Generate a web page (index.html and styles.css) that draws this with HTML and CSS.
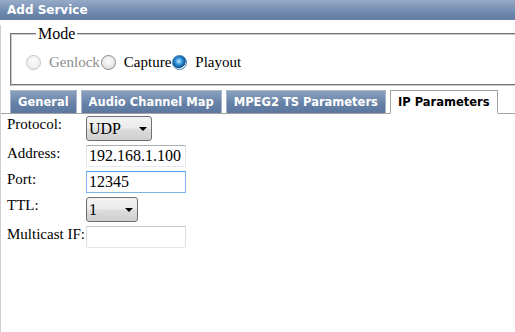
FILE: index.html
```html
<!DOCTYPE html>
<html lang="en">
<head>
    <meta charset="UTF-8">
    <title>Add Service</title>
    <link rel="stylesheet" href="styles.css">
</head>
<body>
    <div class="dialog">
        <div class="titlebar">Add Service</div>
        <div class="content">
            <fieldset class="mode">
                <legend>Mode</legend>
                <div class="radios">
                    <label class="disabled"><input type="radio" name="mode" disabled>Genlock</label>
                    <label><input type="radio" name="mode">Capture</label>
                    <label><input type="radio" name="mode" checked>Playout</label>
                </div>
            </fieldset>

            <ul class="tabs">
                <li>General</li>
                <li>Audio Channel Map</li>
                <li>MPEG2 TS Parameters</li>
                <li class="active">IP Parameters</li>
            </ul>

            <div class="form">
                <label>Protocol:</label>
                <span class="select" style="width: 66px">
                    <select><option>UDP</option><option>RTP</option></select>
                </span>

                <label>Address:</label>
                <input type="text" value="192.168.1.100">

                <label>Port:</label>
                <input type="text" class="focused" value="12345">

                <label>TTL:</label>
                <span class="select" style="width: 52px">
                    <select><option>1</option><option>2</option></select>
                </span>

                <label>Multicast IF:</label>
                <input type="text" class="soft" value="">
            </div>
        </div>
    </div>
</body>
</html>
```

FILE: styles.css
```css
html, body {
    margin: 0;
    padding: 0;
    background: #fff;
}

.dialog {
    font-family: "Liberation Serif", "Times New Roman", serif;
    color: #000;
}

.titlebar {
    height: 20px;
    line-height: 20px;
    padding-left: 7px;
    background: linear-gradient(#97abc8, #6a84aa 70%, #647fa5);
    color: #fff;
    font-family: "DejaVu Sans", Verdana, sans-serif;
    font-weight: bold;
    font-size: 12px;
}

.content {
    border-left: 1px solid #cfcfcf;
    height: 312px;
}

/* mode box */
.mode {
    margin: 5px 0 0 9px;
    padding: 11px 0 13px 13px;
    border: 2px groove #c8c8c8;
    border-right: none;
}

.mode legend {
    font-size: 16px;
    padding: 0 2px;
    margin-left: 11px;
}

.radios {
    display: flex;
    align-items: center;
    font-size: 15px;
}

.radios label {
    display: flex;
    align-items: center;
}

.radios .disabled {
    color: #8d8d8d;
}

.radios input {
    appearance: none;
    -webkit-appearance: none;
    width: 15px;
    height: 15px;
    margin: 0 8px 0 1px;
    border-radius: 50%;
    border: 1px solid #8a8a8a;
    background: radial-gradient(circle at 50% 40%, #fdfdfd 0%, #e9e9e9 55%, #d2d2d2 100%);
    box-sizing: border-box;
}

.radios input:disabled {
    border-color: #c4c4c4;
    background: radial-gradient(circle at 50% 40%, #fbfbfb 0%, #f0f0f0 60%, #e2e2e2 100%);
}

.radios input:checked {
    border-color: #3c7fb1;
    background:
        radial-gradient(circle at 45% 40%, #bfe6ff 0%, #2a8ed8 35%, #0d4a88 62%, transparent 66%),
        radial-gradient(circle, #f5f5f5 60%, #cfd8e0 100%);
}

/* tabs */
.tabs {
    list-style: none;
    margin: 4px 0 0 0;
    padding: 0 0 0 9px;
    display: flex;
    gap: 4px;
    border-bottom: 1px solid #a3a3a3;
    font-family: "DejaVu Sans", Verdana, sans-serif;
    font-size: 11.5px;
    font-weight: bold;
}

.tabs li {
    height: 22px;
    line-height: 22px;
    padding: 0 7px;
    margin-bottom: -1px;
    color: #fff;
    background: linear-gradient(#8aa0be, #6580a6 60%, #5c789e);
    border: 1px solid #a9b6c8;
    border-bottom: none;
}

.tabs li.active {
    color: #000;
    background: #fff;
    border: 1px solid #a3a3a3;
    border-bottom: 1px solid #fff;
}

/* ip form */
.form {
    display: grid;
    grid-template-columns: 79px auto;
    justify-content: start;
    align-items: start;
    row-gap: 4px;
    padding: 2px 0 0 6px;
    font-size: 15px;
}

.form input {
    width: 100px;
    height: 22px;
    box-sizing: border-box;
    margin: 0;
    padding: 0 2px;
    font-family: inherit;
    font-size: 16px;
    border: 1px solid #abadb3;
    border-color: #abadb3 #e2e3ea #e3e9ef #e2e3ea;
    outline: none;
}

.form input.focused {
    border-color: #569de5 #7eb4ea #7eb4ea #7eb4ea;
}

.form input.soft {
    border-color: #c9c9c9 #dedede #e6e6e6 #dedede;
}

.select {
    position: relative;
    display: inline-block;
    height: 25px;
}

.select select {
    appearance: none;
    -webkit-appearance: none;
    width: 100%;
    height: 25px;
    margin: 0;
    padding: 0 0 0 2px;
    border: 1px solid #707070;
    border-radius: 3px;
    background: linear-gradient(#f3f3f3, #ebebeb 48%, #dddddd 52%, #cfcfcf);
    font-family: inherit;
    font-size: 16px;
    color: #000;
    outline: none;
}

.select::after {
    content: "";
    position: absolute;
    right: 5px;
    top: 11px;
    border-top: 4px solid #000;
    border-left: 4px solid transparent;
    border-right: 4px solid transparent;
    pointer-events: none;
}
```
